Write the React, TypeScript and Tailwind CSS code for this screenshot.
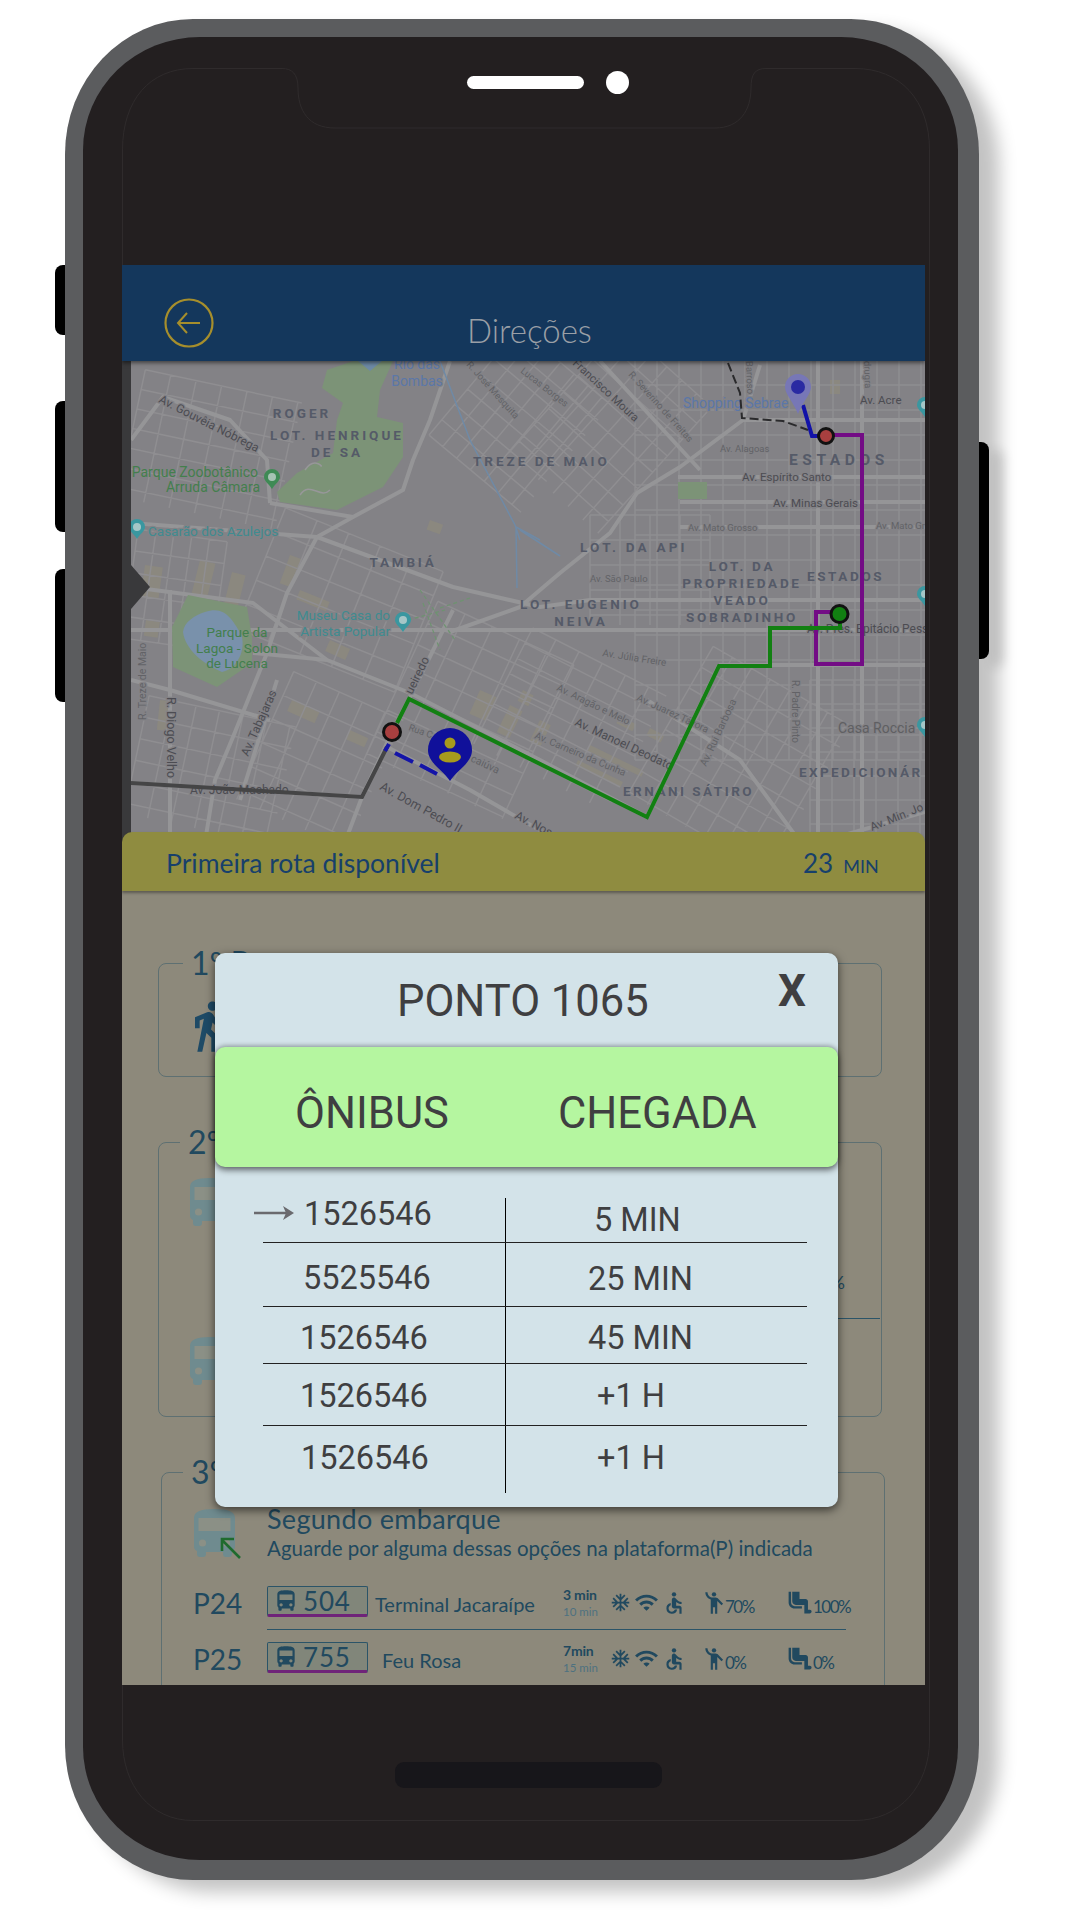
import React from 'react';
import { MdDirectionsBus, MdDirectionsWalk, MdAcUnit, MdWifi, MdAccessible, MdEmojiPeople, MdAirlineSeatLegroomNormal } from 'react-icons/md';

type L = { t: string; x: number; y: number; s?: number; c?: string; a?: 'start' | 'middle' | 'end'; r?: number; w?: number; ls?: number };

const DIST = '#555a68';
const GREEN = '#437f4d';
const TEAL = '#3f8b90';
const BLUE = '#5b77a8';
const GR = '#4c4c52';
const LG = '#626266';

const labels: L[] = [
  { t: 'Rio das', x: 417, y: 369, s: 14, c: BLUE, a: 'middle' },
  { t: 'Bombas', x: 417, y: 386, s: 14, c: BLUE, a: 'middle' },
  { t: 'Av. Gouvêia Nóbrega', x: 158, y: 402, s: 12, c: GR, r: 27 },
  { t: 'ROGER', x: 302, y: 418, s: 13.5, c: DIST, a: 'middle', w: 700, ls: 3 },
  { t: 'LOT. HENRIQUE', x: 337, y: 440, s: 13.5, c: DIST, a: 'middle', w: 700, ls: 3 },
  { t: 'DE SA', x: 337, y: 457, s: 13.5, c: DIST, a: 'middle', w: 700, ls: 3 },
  { t: 'Parque Zoobotânico', x: 258, y: 477, s: 14, c: GREEN, a: 'end' },
  { t: 'Arruda Câmara', x: 260, y: 492, s: 14, c: GREEN, a: 'end' },
  { t: 'Casarão dos Azulejos', x: 148, y: 536, s: 13.5, c: TEAL },
  { t: 'TAMBIÁ', x: 403, y: 567, s: 13.5, c: DIST, a: 'middle', w: 700, ls: 2.8 },
  { t: 'TREZE DE MAIO', x: 473, y: 466, s: 13.5, c: DIST, w: 700, ls: 3 },
  { t: 'LOT. DA API', x: 580, y: 552, s: 13.5, c: DIST, w: 700, ls: 3.2 },
  { t: 'LOT. EUGENIO', x: 581, y: 609, s: 13.5, c: DIST, a: 'middle', w: 700, ls: 3 },
  { t: 'NEIVA', x: 581, y: 626, s: 13.5, c: DIST, a: 'middle', w: 700, ls: 3 },
  { t: 'LOT. DA', x: 742, y: 571, s: 13.5, c: DIST, a: 'middle', w: 700, ls: 2.7 },
  { t: 'PROPRIEDADE', x: 742, y: 588, s: 13.5, c: DIST, a: 'middle', w: 700, ls: 2.7 },
  { t: 'VEADO', x: 742, y: 605, s: 13.5, c: DIST, a: 'middle', w: 700, ls: 2.7 },
  { t: 'SOBRADINHO', x: 742, y: 622, s: 13.5, c: DIST, a: 'middle', w: 700, ls: 2.7 },
  { t: 'ESTADOS', x: 789, y: 465, s: 15.5, c: DIST, w: 700, ls: 4.6 },
  { t: 'ESTADOS', x: 807, y: 581, s: 13.5, c: DIST, w: 700, ls: 2.6 },
  { t: 'EXPEDICIONÁR', x: 799, y: 777, s: 13.5, c: DIST, w: 700, ls: 2.4 },
  { t: 'ERNANI SÁTIRO', x: 623, y: 796, s: 13.5, c: DIST, w: 700, ls: 2.5 },
  { t: 'Museu Casa do', x: 390, y: 620, s: 13.5, c: TEAL, a: 'end' },
  { t: 'Artista Popular', x: 390, y: 636, s: 13.5, c: TEAL, a: 'end' },
  { t: 'Parque da', x: 237, y: 637, s: 13.5, c: GREEN, a: 'middle' },
  { t: 'Lagoa - Solon', x: 237, y: 653, s: 13.5, c: GREEN, a: 'middle' },
  { t: 'de Lucena', x: 237, y: 668, s: 13.5, c: GREEN, a: 'middle' },
  { t: 'R. Treze de Maio', x: 146, y: 720, s: 10.5, c: LG, r: -90 },
  { t: 'R. Diogo Velho', x: 167, y: 697, s: 12.5, c: GR, r: 90 },
  { t: 'Av. Tabajaras', x: 248, y: 757, s: 12, c: GR, r: -66 },
  { t: 'Av. João Machado', x: 190, y: 794, s: 12, c: GR },
  { t: 'Av. Dom Pedro II', x: 379, y: 789, s: 12.5, c: GR, r: 29 },
  { t: 'Av. Nos', x: 514, y: 818, s: 12, c: GR, r: 28 },
  { t: 'ueiredo', x: 412, y: 695, s: 12, c: GR, r: -64 },
  { t: 'Rua C', x: 408, y: 730, s: 9.5, c: LG, r: 20 },
  { t: 'caiúva', x: 470, y: 761, s: 10.5, c: LG, r: 25 },
  { t: 'Shopping Sebrae', x: 683, y: 408, s: 14, c: BLUE },
  { t: 'Av. Acre', x: 860, y: 404, s: 11.5, c: GR },
  { t: 'Av. Alagoas', x: 720, y: 452, s: 9.5, c: LG },
  { t: 'Av. Espírito Santo', x: 742, y: 481, s: 11.5, c: GR },
  { t: 'Av. Minas Gerais', x: 773, y: 507, s: 11.5, c: GR },
  { t: 'Av. Mato Grosso', x: 688, y: 531, s: 9.5, c: LG },
  { t: 'Av. Mato Gr', x: 876, y: 529, s: 9.5, c: LG },
  { t: 'Av. São Paulo', x: 590, y: 582, s: 9.5, c: LG },
  { t: 'Av. Pres. Epitácio Pess', x: 807, y: 633, s: 12, c: GR },
  { t: 'Av. Júlia Freire', x: 602, y: 656, s: 10, c: LG, r: 9 },
  { t: 'Av. Aragão e Melo', x: 556, y: 690, s: 10, c: LG, r: 26 },
  { t: 'Av. Juarez Távora', x: 636, y: 700, s: 10, c: LG, r: 25 },
  { t: 'Av. Manoel Deodato', x: 574, y: 725, s: 12, c: GR, r: 25 },
  { t: 'Av. Carneiro da Cunha', x: 534, y: 738, s: 10, c: LG, r: 23 },
  { t: 'Av. Rui Barbosa', x: 706, y: 767, s: 10.5, c: LG, r: -65 },
  { t: 'R. Padre Pinto', x: 792, y: 680, s: 10, c: LG, r: 90 },
  { t: 'Casa Roccia', x: 838, y: 733, s: 14, c: '#5f5f62' },
  { t: 'Av. Min. Jo', x: 872, y: 831, s: 11.5, c: GR, r: -22 },
  { t: 'R. José Mesquita', x: 466, y: 365, s: 9.5, c: LG, r: 48 },
  { t: 'Francisco Moura', x: 572, y: 364, s: 11.5, c: GR, r: 43 },
  { t: 'Lucas Borges', x: 520, y: 372, s: 9.5, c: LG, r: 38 },
  { t: 'R. Severino de Freitas', x: 628, y: 375, s: 9.5, c: LG, r: 48 },
  { t: 'Barroso', x: 746, y: 361, s: 9.5, c: LG, r: 88 },
  { t: 'drugra', x: 864, y: 361, s: 9.5, c: LG, r: 88 },
];

const majors = [
  '450,361 430,420 413,460 403,490 353,517 317,537 287,593 267,653 233,737 215,780 205,842',
  '270,503 353,517',
  '317,537 453,587 540,607 590,600 925,600',
  '131,523 317,537',
  '131,587 253,603 327,660 410,693 540,760 647,817',
  '253,653 327,660',
  '453,610 410,697 392,732 362,797 345,842',
  '131,630 925,630',
  '387,747 470,790 560,842',
  '170,590 170,842',
  '277,680 240,800',
  '131,440 163,397 230,420 267,460 270,503',
  '743,420 680,467 637,493 610,533 560,573 520,607 450,632',
  '743,420 925,420',
  '678,477 925,477',
  '680,502 925,502',
  '680,527 925,527',
  '719,665 925,665',
  '818,361 818,842',
  '862,361 862,842',
  '719,665 647,817',
  '131,783 362,797',
  '600,361 700,470',
  '131,680 170,690 270,720',
  '925,812 820,842',
  '760,365 743,420',
  '647,700 740,760 800,842',
];

type R = { cx: number; cy: number; w: number; h: number; a: number; dx: number; dy: number };
const regions: R[] = [
  { cx: 210, cy: 450, w: 160, h: 130, a: 12, dx: 26, dy: 20 },
  { cx: 175, cy: 590, w: 90, h: 110, a: 8, dx: 18, dy: 22 },
  { cx: 210, cy: 770, w: 150, h: 120, a: 12, dx: 24, dy: 22 },
  { cx: 340, cy: 600, w: 170, h: 130, a: 22, dx: 34, dy: 26 },
  { cx: 320, cy: 760, w: 120, h: 140, a: 24, dx: 25, dy: 26 },
  { cx: 470, cy: 710, w: 150, h: 170, a: 25, dx: 30, dy: 24 },
  { cx: 520, cy: 420, w: 120, h: 140, a: 40, dx: 18, dy: 20 },
  { cx: 610, cy: 430, w: 120, h: 170, a: 42, dx: 20, dy: 22 },
  { cx: 570, cy: 720, w: 150, h: 130, a: 27, dx: 26, dy: 17 },
  { cx: 650, cy: 570, w: 120, h: 110, a: 0, dx: 30, dy: 25 },
  { cx: 780, cy: 560, w: 290, h: 400, a: 0, dx: 22, dy: 25 },
  { cx: 740, cy: 760, w: 160, h: 170, a: 30, dx: 22, dy: 24 },
  { cx: 870, cy: 760, w: 120, h: 160, a: 0, dx: 22, dy: 24 },
];

const thin: string[] = [];
regions.forEach((g) => {
  const rad = (g.a * Math.PI) / 180;
  const cos = Math.cos(rad);
  const sin = Math.sin(rad);
  const pt = (u: number, v: number) => `M${(g.cx + u * cos - v * sin).toFixed(1)} ${(g.cy + u * sin + v * cos).toFixed(1)}`;
  const pl = (u: number, v: number) => `L${(g.cx + u * cos - v * sin).toFixed(1)} ${(g.cy + u * sin + v * cos).toFixed(1)}`;
  for (let u = -g.w / 2; u <= g.w / 2; u += g.dx) thin.push(pt(u, -g.h / 2) + pl(u, g.h / 2));
  for (let v = -g.h / 2; v <= g.h / 2; v += g.dy) thin.push(pt(-g.w / 2, v) + pl(g.w / 2, v));
});

const tan: [number, number, number, number, number][] = [
  [145, 565, 18, 32, 8], [200, 560, 16, 40, 14], [232, 572, 14, 36, 14], [146, 620, 14, 16, 8], [290, 555, 12, 30, 20],
  [300, 590, 32, 10, 22], [330, 640, 22, 12, 24], [292, 700, 30, 12, 24], [350, 730, 20, 10, 24], [480, 690, 18, 26, 24],
  [510, 705, 14, 30, 26], [540, 720, 12, 24, 26], [578, 760, 50, 6, 26], [590, 745, 60, 6, 26], [620, 716, 18, 8, 27],
  [650, 728, 16, 8, 27], [523, 690, 12, 12, 27], [830, 380, 10, 14, 0], [430, 520, 14, 10, 20], [160, 700, 10, 30, 6],
];

const PinMark = ({ x, y, c }: { x: number; y: number; c: string }) => (
  <g>
    <path d={`M${x - 8} ${y} a8 8 0 1 1 16 0 c0 4 -5 7 -8 12 c-3 -5 -8 -8 -8 -12z`} fill={c} />
    <circle cx={x} cy={y} r={4} fill="#c9d6d4" opacity={0.75} />
  </g>
);

const MapArt = () => (
  <svg viewBox="131 361 794 481" className="block w-full h-[481px]">
    <rect x="131" y="361" width="794" height="481" fill="#838286" />
    {tan.map(([x, y, w, h, a], i) => (
      <rect key={i} x={x} y={y} width={w} height={h} fill="#8b887f" transform={`rotate(${a} ${x} ${y})`} />
    ))}
    <path d={thin.join(' ')} stroke="#8f8e91" strokeWidth={1.5} fill="none" />
    {majors.map((p, i) => (
      <polyline key={i} points={p} stroke="#959597" strokeWidth={4} fill="none" strokeLinejoin="round" />
    ))}
    <path d="M327 370 L353 361 L393 361 L380 390 L377 417 L403 423 L403 457 L383 487 L337 510 L280 502 L277 492 L297 473 L333 453 L337 420 L343 403 L322 388Z" fill="#7c9377" />
    <path d="M300 495 C310 480 320 500 330 490 M305 470 C315 455 325 470 320 465" stroke="#979799" strokeWidth={1.5} fill="none" />
    <path d="M358 361 L370 371 L382 361Z" fill="#6d8aa6" />
    <path d="M188 595 L247 607 L252 637 L252 663 L217 687 L173 667 L172 627Z" fill="#7c9377" />
    <path d="M205 612 C225 605 232 620 240 632 C247 645 240 668 222 672 C205 665 185 650 183 632 C184 622 195 615 205 612Z" fill="#7991ab" />
    <path d="M440 608 L470 598 M423 603 L440 650 M408 620 L445 610 M420 590 L455 640" stroke="#6e9370" strokeWidth={1.2} strokeDasharray="4 3" fill="none" />
    <rect x="678" y="482" width="29" height="17" fill="#7c9377" />
    <path d="M440 361 L470 440 L515 525 L520 540 M516 527 L540 540 M516 527 L517 588" stroke="#6f8aa6" strokeWidth={1.5} fill="none" />
    <path d="M520 530 L560 556" stroke="#6f8aa6" strokeWidth={1.5} fill="none" />
    {labels.map((l, i) => (
      <text
        key={i}
        x={l.x}
        y={l.y}
        fontSize={l.s ?? 12}
        fill={l.c ?? GR}
        fontWeight={l.w ?? 400}
        letterSpacing={l.ls ?? 0}
        textAnchor={l.a ?? 'start'}
        fontFamily="Roboto, sans-serif"
        stroke={l.c === DIST || l.c === GREEN ? 'none' : '#838286'}
        strokeWidth={2.5}
        paintOrder="stroke"
        transform={l.r ? `rotate(${l.r} ${l.x} ${l.y})` : undefined}
      >
        {l.t}
      </text>
    ))}
    <PinMark x={272} y={477} c="#3f8a55" />
    <PinMark x={137} y={527} c="#3a97a0" />
    <PinMark x={403} y={620} c="#3a97a0" />
    <PinMark x={925} y={405} c="#3a97a0" />
    <PinMark x={925} y={594} c="#3a97a0" />
    <PinMark x={925} y={725} c="#3a97a0" />

    <polyline points="131,783 362,797 387,747" stroke="#454546" strokeWidth={4} fill="none" />
    <polyline points="728,363 740,393 742,418 783,421 808,430" stroke="#2a2a2c" strokeWidth={2} strokeDasharray="9 4" fill="none" />
    <polyline points="833,435 862,435 862,664 816,664 816,612 832,612" stroke="#730c85" strokeWidth={4} fill="none" />
    <polyline points="397,723 409,699 647,817 719,666 770,666 770,628 840,628 840,615" stroke="#128012" strokeWidth={4} fill="none" />
    <polyline points="803,405 812,436 818,436" stroke="#1212a8" strokeWidth={4} fill="none" />
    <path d="M785 387 a13 13 0 1 1 26 0 c0 7 -9 16 -13 27 c-4 -11 -13 -20 -13 -27z" fill="#7777b6" />
    <circle cx="798" cy="387" r="7" fill="#2a2aa2" />
    <path d="M385 751 L389 744 M395 753 L413 762 M420 765 L437 774" stroke="#1414a8" strokeWidth={4} fill="none" />
    <path d="M428 750 a22 22 0 1 1 44 0 c0 13 -15 20 -22 31 c-7 -11 -22 -18 -22 -31z" fill="#10109a" />
    <circle cx="450" cy="743" r="5.5" fill="#a79a1c" />
    <ellipse cx="450" cy="757" rx="11" ry="5.5" fill="#a79a1c" />
    <circle cx="392" cy="732" r="8.5" fill="#a83f3f" stroke="#111" strokeWidth={3} />
    <circle cx="826" cy="436" r="7.5" fill="#a83f3f" stroke="#111" strokeWidth={3} />
    <circle cx="839.500" cy="614" r="8.500" fill="#128012" stroke="#111" strokeWidth={3} />
  </svg>
);

const BigBus = () => (
  <svg viewBox="0 0 41 48" className="w-[41px] h-[48px] block">
    <path d="M0 9C0 3 6 0 20.500 0S41 3 41 9V37C41 40 40 41 38 42V45C38 47 37 48 35 48H32C30 48 29 47 29 45V43H12V45C12 47 11 48 9 48H6C4 48 3 47 3 45V42C1 41 0 40 0 37Z" fill="#6f8b8f" />
    <rect x="4.500" y="9" width="32" height="13" fill="#8b9086" />
    <circle cx="8.500" cy="34" r="3.600" fill="#8b9086" />
    <circle cx="32.500" cy="34" r="3.600" fill="#8b9086" />
  </svg>
);

const Row = ({ p, n, nameCls, time, sub, a, b }: { p: string; n: string; nameCls: string; time: string; sub: string; a: string; b: string }) => (
  <div className="flex h-[31px] text-[#21495f]">
    <div className="w-[73px] -ml-[1px] mr-[1px] text-[28px] leading-[31px] pt-[2px]">{p}</div>
    <div className="w-[101px] h-[31px] border border-[#2b5468] border-b-[3px] border-b-[#6f2379] rounded-[2px] bg-[#81867a] flex items-center">
      <MdDirectionsBus className="text-[#21495f] ml-[5px] shrink-0" size={26} />
      <span className="text-[26px] leading-[28px] ml-[4px] tracking-[0.8px]">{n}</span>
    </div>
    <div className={`w-[195px] text-[20px] leading-[31px] pt-[3px] whitespace-nowrap ${nameCls}`}>{n === '504' ? 'Terminal Jacaraípe' : 'Feu Rosa'}</div>
    <div className="w-[47px] flex flex-col">
      <span className="text-[14px] leading-[18px] font-bold whitespace-nowrap tracking-[-0.2px]">{time}</span>
      <span className="text-[11.500px] leading-[14px] mt-[1px] text-[#4d7180] whitespace-nowrap">{sub}</span>
    </div>
    <div className="w-[20px] flex justify-center pt-[6px]"><MdAcUnit className="shrink-0" size={21} /></div>
    <div className="w-[24px] ml-[4px] flex justify-center pt-[4px]"><MdWifi className="shrink-0" size={25} /></div>
    <div className="w-[17px] ml-[7px] flex justify-center pt-[4px]"><MdAccessible className="shrink-0" size={26} /></div>
    <div className="w-[17px] ml-[23px] flex justify-center pt-[4px]"><MdEmojiPeople className="shrink-0" size={26} /></div>
    <div className="w-[63px] ml-[3px] text-[17px] leading-[31px] pt-[5px] tracking-[-1.5px]">{a}</div>
    <div className="w-[22px] flex justify-center pt-[2px]"><MdAirlineSeatLegroomNormal className="shrink-0" size={29} /></div>
    <div className="ml-[3px] text-[17px] leading-[31px] pt-[5px] tracking-[-1.5px]">{b}</div>
  </div>
);

const table = [
  { l: '1526546', r: '5 MIN', lc: 'pl-[41px] pt-0', rc: 'pl-[88px] pt-[6px]', h: 'h-[45px]' },
  { l: '5525546', r: '25 MIN', lc: 'pl-[40px] pt-[19px]', rc: 'pl-[82px] pt-[20px]', h: 'h-[64px]' },
  { l: '1526546', r: '45 MIN', lc: 'pl-[37px] pt-[15px]', rc: 'pl-[82px] pt-[15px]', h: 'h-[57px]' },
  { l: '1526546', r: '+1 H', lc: 'pl-[37px] pt-[16px]', rc: 'pl-[91px] pt-[16px]', h: 'h-[62px]' },
  { l: '1526546', r: '+1 H', lc: 'pl-[38px] pt-[16px]', rc: 'pl-[91px] pt-[16px]', h: 'h-[67px]' },
];

export default function App() {
  return (
    <div className="w-[1080px] h-[1920px] bg-white overflow-hidden pt-[19px] pl-[65px] font-['Lato',sans-serif]">
      <div className="relative w-[914px] h-[1861px] rounded-[128px/135px] bg-[#5b5c5e] pt-[18px] pl-[18px] pr-[21px] pb-[20px] shadow-[20px_12px_18px_rgba(0,0,0,0.24)]">
        <div className="absolute -left-[10px] top-[246px] w-[10px] h-[70px] bg-black rounded-l-[8px]" />
        <div className="absolute -left-[10px] top-[382px] w-[10px] h-[131px] bg-black rounded-l-[8px]" />
        <div className="absolute -left-[10px] top-[550px] w-[10px] h-[133px] bg-black rounded-l-[8px]" />
        <div className="absolute -right-[10px] top-[423px] w-[10px] h-[217px] bg-black rounded-r-[8px] shadow-[14px_8px_12px_rgba(0,0,0,0.16)]" />

        <div className="relative h-full rounded-[117px/113px] bg-[#231f20] flex flex-col">
          <svg viewBox="122 68 808 1753" className="absolute left-[39px] top-[31px] w-[808px] h-[1753px]">
            <path
              d="M122.500 265V150C122.500 100 150 68.500 193 68.500H282C292 68.500 298 74 298 88C298 110 308 128 335 128H715C740 128 751 110 751 88C751 74 755 68.500 766 68.500H855C900 68.500 929.500 100 929.500 150V1740C929.500 1785 900 1820.500 855 1820.500H193C150 1820.500 122.500 1785 122.500 1740V1685"
              fill="none"
              stroke="#2f2b2c"
              strokeWidth={1}
            />
          </svg>
          <div className="relative h-[228px] flex shrink-0">
            <div className="ml-[384px] mt-[39px] w-[117px] h-[13px] rounded-full bg-white" />
            <div className="ml-[22px] mt-[34px] w-[23px] h-[23px] rounded-full bg-white" />
          </div>

          <div className="relative ml-[39px] w-[803px] h-[1420px] flex flex-col bg-[#8d897b] overflow-hidden">
            <div className="relative z-10 h-[96px] bg-[#14375c] flex shrink-0 shadow-[0_2px_4px_rgba(0,0,0,0.5)]">
              <svg viewBox="0 0 50 50" className="w-[50px] h-[50px] ml-[42px] mt-[33px]">
                <circle cx="25" cy="25" r="23.500" fill="none" stroke="#a68e2c" strokeWidth={2.2} />
                <path d="M36 25H14M23 15L14 25L23 35" fill="none" stroke="#a68e2c" strokeWidth={2} />
              </svg>
              <span className="ml-[253px] mt-[49px] text-[33px] leading-[33px] font-light text-[#9a9fa6]">Direções</span>
            </div>

            <div className="relative flex h-[481px] shrink-0">
              <div className="w-[9px] bg-[#39393b]" />
              <div className="flex-1"><MapArt /></div>
              <svg viewBox="0 0 20 44" className="absolute left-[9px] top-[204px] w-[20px] h-[44px]">
                <path d="M0 0L19 22L0 44Z" fill="#39393b" />
              </svg>
            </div>

            <div className="relative z-10 -mt-[10px] h-[59px] shrink-0 bg-[#8f8c40] rounded-t-[10px] flex items-start text-[#17406b] shadow-[0_2px_3px_rgba(0,0,0,0.35)]">
              <span className="ml-[44px] mt-[15px] w-[637px] text-[26.500px] leading-[32px] whitespace-nowrap">Primeira rota disponível</span>
              <span className="mt-[15px] text-[26px] leading-[32px]">23</span>
              <span className="ml-[10px] mt-[20px] text-[18px] leading-[28px]">MIN</span>
            </div>

            <div className="flex-1 text-[#21495f]">
              <div className="relative ml-[36px] mt-[72px] w-[724px] h-[114px] border border-[#5e7072] rounded-[8px] pl-[22px] pt-[34px]">
                <span className="absolute left-[24px] -top-[17px] px-[8px] bg-[#8d897b] text-[32px] leading-[32px] whitespace-nowrap">1º Passo</span>
                <MdDirectionsWalk size={56} className="text-[#1e4a66] shrink-0" />
              </div>

              <div className="relative ml-[36px] mt-[65px] w-[724px] h-[275px] border border-[#5e7072] rounded-[8px] pl-[31px] pt-[35px]">
                <span className="absolute left-[21px] -top-[17px] px-[8px] bg-[#8d897b] text-[32px] leading-[32px] whitespace-nowrap">2º Passo</span>
                <BigBus />
                <div className="mt-[46px] h-[20px] pr-[36px] text-right text-[18px] leading-[20px]">100%</div>
                <div className="mt-[26px] ml-auto mr-[1px] w-[300px] h-px bg-[#2b5468]" />
                <div className="mt-[18px]"><BigBus /></div>
              </div>

              <div className="relative ml-[39px] mt-[55px] w-[724px] h-[300px] border border-[#5e7072] rounded-[8px] pl-[32px] pt-[36px]">
                <span className="absolute left-[21px] -top-[17px] px-[8px] bg-[#8d897b] text-[32px] leading-[32px] whitespace-nowrap">3º Passo</span>
                <div className="flex h-[77px]">
                  <div className="relative w-[41px] h-[48px]">
                    <BigBus />
                    <svg viewBox="0 0 22 22" className="absolute left-[26px] top-[28px] w-[22px] h-[22px]">
                      <path d="M20 21L2 3M2 14V2H14" fill="none" stroke="#1f6b2e" strokeWidth={2.6} />
                    </svg>
                  </div>
                  <div className="ml-[32px] -mt-[4px] flex flex-col whitespace-nowrap">
                    <span className="text-[27px] leading-[28px] tracking-[0.3px]">Segundo embarque</span>
                    <span className="text-[20.500px] leading-[24px] mt-[3px]">Aguarde por alguma dessas opções na plataforma(P) indicada</span>
                  </div>
                </div>
                <Row p="P24" n="504" nameCls="pl-[7px]" time="3 min" sub="10 min" a="70%" b="100%" />
                <div className="ml-[73px] w-[579px] h-px my-[12px] bg-[#2b5468]" />
                <Row p="P25" n="755" nameCls="pl-[14px]" time="7min" sub="15 min" a="0%" b="0%" />
              </div>
            </div>

            <div className="absolute z-20 left-[93px] top-[688px] w-[623px] h-[554px] bg-[#d3e3e9] rounded-[10px] shadow-[0_3px_10px_rgba(0,0,0,0.6)] font-['Roboto',sans-serif] text-[#3f3f41]">
              <div className="relative h-[94px] pl-[182px] pt-[28px]">
                <span className="text-[43.500px] leading-[42px]">PONTO 1065</span>
                <span className="absolute right-[32px] top-[16px] text-[44px] leading-[44px] font-bold">X</span>
              </div>
              <div className="h-[120px] bg-[#b5f6a0] rounded-[10px] flex pt-[46px] pl-[80px] text-[43.500px] leading-[42px] shadow-[0_3px_6px_rgba(0,0,0,0.55),0_-2px_4px_rgba(0,0,0,0.2)]">
                <span className="w-[263px]">ÔNIBUS</span>
                <span>CHEGADA</span>
              </div>
              <div className="relative ml-[48px] mt-[31px] w-[544px] text-[32.500px] leading-[32px]">
                <svg viewBox="0 0 40 14" className="absolute -left-[9px] top-[8px] w-[40px] h-[14px]">
                  <path d="M0 7H33" stroke="#6a6a6e" strokeWidth={2.6} />
                  <path d="M29 0L40 7L29 14L32 7Z" fill="#6a6a6e" />
                </svg>
                {table.map((r, i) => (
                  <div key={i} className={`flex ${r.h} ${i < 4 ? 'border-b border-[#222]' : ''}`}>
                    <div className={`w-[243px] h-full border-r border-black whitespace-nowrap ${r.lc}`}>{r.l}</div>
                    <div className={`flex-1 whitespace-nowrap ${r.rc}`}>{r.r}</div>
                  </div>
                ))}
              </div>
            </div>
          </div>

          <div className="flex justify-center ml-[16px] mt-[77px]">
            <div className="w-[267px] h-[26px] rounded-[9px] bg-[#17161a]" />
          </div>
        </div>
      </div>
    </div>
  );
}
